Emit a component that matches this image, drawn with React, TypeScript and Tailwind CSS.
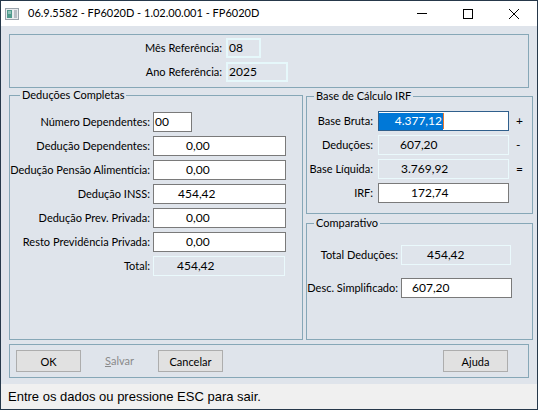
import type { ReactNode } from 'react';
import clsx from 'clsx';

type FieldKind = 'edit' | 'ro' | 'ro2';

const fieldLook: Record<FieldKind, string> = {
  edit: 'border border-[#7a7a7a] bg-white',
  ro: 'border border-[#eaf9fc]',
  ro2: 'border-2 border-[#e6f8fb]',
};

function Field({ value, kind, className }: { value: string; kind: FieldKind; className: string }) {
  return (
    <div className={clsx('flex h-[20px] items-center text-[12px] leading-none text-black', fieldLook[kind], className)}>
      {value}
    </div>
  );
}

function Label({ children }: { children: ReactNode }) {
  return <span className="whitespace-nowrap text-right text-[11px] leading-[20px] text-black">{children}</span>;
}

function Sign({ children }: { children: ReactNode }) {
  return <span className="pl-[2px] text-[12px] leading-[20px] text-black">{children}</span>;
}

function Group({ title, legendClass, className, children }: { title: string; legendClass: string; className: string; children: ReactNode }) {
  return (
    <fieldset className={clsx('border border-[#86a7b7]', className)}>
      <legend className={clsx('px-[2px] text-[11px] leading-[14px] text-black', legendClass)}>{title}</legend>
      {children}
    </fieldset>
  );
}

function Button({ children, className }: { children: ReactNode; className?: string }) {
  return (
    <button
      className={clsx('h-[22px] w-[65px] shrink-0 border border-[#adadad] bg-[#e1e1e1] text-[11px] leading-none text-black', className)}
    >
      {children}
    </button>
  );
}

export default function App() {
  return (
    <div className="flex h-[410px] w-[538px] flex-col border border-[#26384a] bg-[#dfe4eb] font-['Lato',sans-serif]">
      {/* title bar */}
      <div className="flex h-[25px] shrink-0 items-center bg-white">
        <svg width="14" height="12" viewBox="0 0 14 12" className="ml-[4px]">
          <rect x="0.5" y="0.5" width="13" height="11" fill="#e9ecef" stroke="#9aa3ab" />
          <rect x="2" y="2" width="5" height="8" fill="#4f9a8c" />
          <rect x="3" y="3" width="3" height="3" fill="#8fc3b8" />
          <rect x="9" y="2" width="3" height="8" fill="#b7bec5" />
        </svg>
        <span className="ml-[9px] text-[11px] text-black">06.9.5582 - FP6020D - 1.02.00.001 - FP6020D</span>
        <div className="ml-auto flex h-full">
          <div className="flex w-[46px] items-center justify-center">
            <div className="h-px w-[10px] bg-black" />
          </div>
          <div className="flex w-[46px] items-center justify-center">
            <div className="h-[10px] w-[10px] border border-black" />
          </div>
          <div className="flex w-[46px] items-center justify-center">
            <svg width="10" height="10" viewBox="0 0 10 10">
              <path d="M0 0L10 10M10 0L0 10" stroke="#000" strokeWidth="1" />
            </svg>
          </div>
        </div>
      </div>

      {/* reference period */}
      <div className="mx-[8px] mt-[8px] h-[54px] border border-[#86a7b7] pt-[3px]">
        <div className="grid grid-cols-[212px_auto] gap-x-[4px] gap-y-[4px]">
          <Label>Mês Referência:</Label>
          <Field value="08" kind="ro2" className="w-[35px] pl-[1px] text-[11px]" />
          <Label>Ano Referência:</Label>
          <Field value="2025" kind="ro2" className="w-[62px] pl-[1px] text-[11px]" />
        </div>
      </div>

      <div className="mx-[8px] flex gap-[3px]">
        <Group title="Deduções Completas" legendClass="ml-[10px]" className="h-[252px] w-[294px] shrink-0 pt-[10px]">
          <div className="grid grid-cols-[140px_auto] items-center gap-x-[3px] gap-y-[4px]">
            <Label>Número Dependentes:</Label>
            <Field value="00" kind="edit" className="w-[39px] pl-[1px]" />
            <Label>Dedução Dependentes:</Label>
            <Field value="0,00" kind="edit" className="w-[133px] pl-[32px]" />
            <Label>Dedução Pensão Alimentícia:</Label>
            <Field value="0,00" kind="edit" className="w-[133px] pl-[32px]" />
            <Label>Dedução INSS:</Label>
            <Field value="454,42" kind="edit" className="w-[133px] pl-[24px]" />
            <Label>Dedução Prev. Privada:</Label>
            <Field value="0,00" kind="edit" className="w-[133px] pl-[32px]" />
            <Label>Resto Previdência Privada:</Label>
            <Field value="0,00" kind="edit" className="w-[133px] pl-[32px]" />
            <Label>Total:</Label>
            <Field value="454,42" kind="ro" className="w-[132px] pl-[23px]" />
          </div>
        </Group>

        <div className="flex w-[227px] shrink-0 flex-col">
          <Group title="Base de Cálculo IRF" legendClass="ml-[7px]" className="mt-[1px] h-[125px] pt-[8px]">
            <div className="grid grid-cols-[66px_131px_auto] items-center gap-x-[5px] gap-y-[4px]">
              <Label>Base Bruta:</Label>
              <div className="flex h-[20px] w-[131px] items-center border border-[#2f5f8c] bg-white">
                <span className="flex h-[17px] w-[64px] items-center justify-end bg-[#0078d7] pr-[1px] text-[12px] leading-none text-white">
                  4.377,12
                </span>
                <span className="h-[16px] w-px bg-[#e9772e]" />
              </div>
              <Sign>+</Sign>
              <Label>Deduções:</Label>
              <Field value="607,20" kind="ro" className="w-[131px] pl-[21px]" />
              <Sign>-</Sign>
              <Label>Base Líquida:</Label>
              <Field value="3.769,92" kind="ro" className="w-[131px] pl-[22px]" />
              <Sign>=</Sign>
              <Label>IRF:</Label>
              <Field value="172,74" kind="edit" className="w-[131px] pl-[32px]" />
              <span />
            </div>
          </Group>

          <Group title="Comparativo" legendClass="ml-[7px]" className="mt-[2px] h-[124px] pt-[15px]">
            <div className="grid grid-cols-[91px_111px] items-center gap-x-[3px] gap-y-[13px]">
              <Label>Total Deduções:</Label>
              <Field value="454,42" kind="ro" className="w-[110px] pl-[25px]" />
              <Label>Desc. Simplificado:</Label>
              <Field value="607,20" kind="edit" className="w-[111px] pl-[10px]" />
            </div>
          </Group>
        </div>
      </div>

      {/* buttons */}
      <div className="mx-[8px] mt-[4px] flex h-[34px] items-start gap-[6px] border border-[#86a7b7] pl-[6px] pr-[20px] pt-[5px]">
        <Button>OK</Button>
        <span className="flex h-[22px] w-[65px] items-center justify-center text-[11px] text-[#8a8a8a]">
          <span className="underline">S</span>alvar
        </span>
        <Button>Cancelar</Button>
        <Button className="ml-auto">Ajuda</Button>
      </div>

      {/* status line */}
      <div className="mt-auto flex h-[25px] items-center bg-[#f0f0f0] pl-[7px] font-['Liberation_Sans',sans-serif] text-[13px] text-black">
        Entre os dados ou pressione ESC para sair.
      </div>
    </div>
  );
}
